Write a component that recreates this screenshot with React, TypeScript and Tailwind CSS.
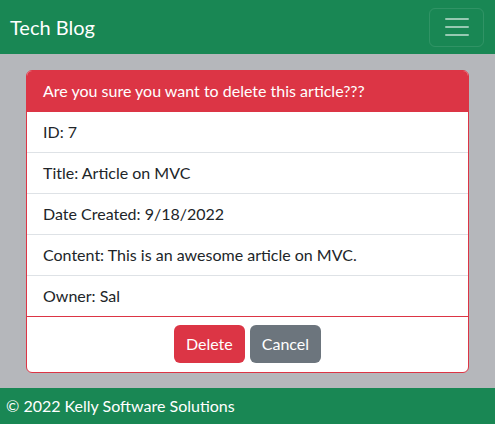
import React from 'react';

const rows = [
  'ID: 7',
  'Title: Article on MVC',
  'Date Created: 9/18/2022',
  'Content: This is an awesome article on MVC.',
  'Owner: Sal',
];

export default function App() {
  return (
    <div className="h-screen flex flex-col bg-[#b5b7bb] text-[#212529] font-['Lato',sans-serif] text-base leading-6">
      {/* Navbar */}
      <nav className="h-[54px] shrink-0 bg-[#198754] flex items-center justify-between pl-[10px] pr-[11px]">
        <span className="text-white text-xl leading-[30px]">Tech Blog</span>
        <button className="w-[55px] h-[39px] rounded-md border border-white/10 flex items-center justify-center">
          <svg width="30" height="30" viewBox="0 0 30 30">
            <path d="M4 7h22M4 15h22M4 23h22" stroke="rgba(255,255,255,0.55)" strokeWidth="2" strokeLinecap="round" />
          </svg>
        </button>
      </nav>

      {/* Main */}
      <main className="flex-1 px-[26px] pt-4">
        <div className="border border-[#dc3545] rounded-md bg-white overflow-hidden">
          <div className="bg-[#dc3545] text-white px-4 py-2 border-b border-[#dc3545]">
            Are you sure you want to delete this article???
          </div>
          <ul>
            {rows.map((r, i) => (
              <li
                key={r}
                className={i < rows.length - 1 ? 'px-4 py-2 border-b border-[#dee2e6]' : 'px-4 py-2'}
              >
                {r}
              </li>
            ))}
          </ul>
          <div className="border-t border-[#dc3545] flex justify-center gap-[5px] pt-2 pb-[9px]">
            <button className="bg-[#dc3545] text-white rounded-md px-3 h-[38px]">Delete</button>
            <button className="bg-[#6c757d] text-white rounded-md px-3 h-[38px]">Cancel</button>
          </div>
        </div>
      </main>

      {/* Footer */}
      <footer className="h-9 shrink-0 bg-[#198754] text-white px-[6px] flex items-center">
        © 2022 Kelly Software Solutions
      </footer>
    </div>
  );
}
